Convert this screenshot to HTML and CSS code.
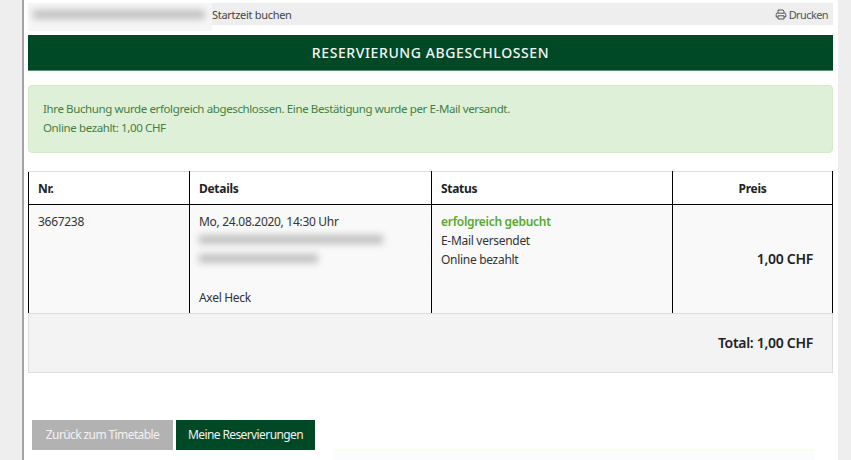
FILE: index.html
```html
<!DOCTYPE html>
<html lang="de">
<head>
<meta charset="utf-8">
<title>Reservierung abgeschlossen</title>
<link rel="stylesheet" href="styles.css">
</head>
<body>
<main class="page">
  <div class="topbar">
    <div class="crumb-mask"><span class="blur-bar"></span></div>
    <span class="crumb">Startzeit buchen</span>
    <a class="print">
      <svg class="print-icon" viewBox="0 0 12 11" aria-hidden="true"><path d="M3 4V1h5l1 1v2M3 8H1.2V5.2q0-1 1-1h7.6q1 0 1 1V8H9M3 6.8h6V10H3z" fill="none" stroke="currentColor" stroke-width="1"/></svg>
      Drucken
    </a>
  </div>
  <h1 class="banner">RESERVIERUNG ABGESCHLOSSEN</h1>
  <div class="alert">
    <p>Ihre Buchung wurde erfolgreich abgeschlossen. Eine Bestätigung wurde per E-Mail versandt.</p>
    <p>Online bezahlt: 1,00 CHF</p>
  </div>
  <table class="orders">
    <thead>
      <tr>
        <th class="c-nr">Nr.</th>
        <th class="c-details">Details</th>
        <th class="c-status">Status</th>
        <th class="c-price">Preis</th>
      </tr>
    </thead>
    <tbody>
      <tr>
        <td>3667238</td>
        <td>
          <div>Mo, 24.08.2020, 14:30 Uhr</div>
          <div class="line"><span class="blur-bar wide"></span></div>
          <div class="line"><span class="blur-bar narrow"></span></div>
          <div class="line"></div>
          <div>Axel Heck</div>
        </td>
        <td>
          <div class="ok">erfolgreich gebucht</div>
          <div>E-Mail versendet</div>
          <div>Online bezahlt</div>
        </td>
        <td class="amount">1,00 CHF</td>
      </tr>
    </tbody>
  </table>
  <div class="total">Total: 1,00 CHF</div>
  <div class="actions">
    <a class="btn btn-grey">Zurück zum Timetable</a>
    <a class="btn btn-green">Meine Reservierungen</a>
  </div>
  <div class="notice"></div>
</main>
</body>
</html>
```
FILE: styles.css
```css
* { box-sizing: border-box; }
html, body { height: 100%; }
body {
  margin: 0;
  overflow: hidden;
  background: #eeeeee;
  font-family: "Noto Sans", "Liberation Sans", sans-serif;
  font-size: 12px;
  letter-spacing: -0.3px;
  color: #333333;
}
.page {
  width: 816px;
  height: 460px;
  margin-left: 22px;
  padding: 3px 5px 0 4px;
  background: #ffffff;
  border-left: 2px solid #a3a3a3;
  overflow: hidden;
}
.topbar {
  display: flex;
  align-items: center;
  height: 22px;
  background: #eeeeee;
  font-size: 11px;
  letter-spacing: -0.3px;
}
.crumb-mask {
  flex: none;
  align-self: flex-start;
  display: flex;
  align-items: center;
  width: 184px;
  height: 28px;
  padding: 0 7px 6px 5px;
  background: #f6f6f6;
}
.blur-bar {
  display: block;
  height: 9px;
  background: #c0c0c0;
  filter: blur(3.5px);
}
.crumb-mask .blur-bar { width: 172px; }
.blur-bar.wide { width: 184px; }
.blur-bar.narrow { width: 119px; }
.crumb { color: #444444; }
.print {
  display: flex;
  align-items: center;
  gap: 2px;
  margin-left: auto;
  padding-right: 5px;
  color: #555555;
  letter-spacing: -0.6px;
}
.print-icon { width: 12px; height: 11px; }
.banner {
  margin: 10px 0 0;
  height: 36px;
  line-height: 36px;
  background: #004926;
  border-bottom: 1px solid #5d8f76;
  color: #f4f7f5;
  font-size: 14px;
  font-weight: 500;
  letter-spacing: 0.6px;
  text-align: center;
}
.alert {
  height: 68px;
  margin-top: 14px;
  padding: 13px 14px 0;
  background: #dff0d8;
  border: 1px solid #d6e9c6;
  border-radius: 4px;
  color: #437f44;
  font-size: 11.5px;
  letter-spacing: -0.38px;
  line-height: 19px;
}
.alert p { margin: 0; }
.orders {
  width: 805px;
  margin-top: 18px;
  border-collapse: collapse;
  table-layout: fixed;
}
.orders th, .orders td {
  padding: 0 9px;
  border-left: 1px solid #000000;
  border-right: 1px solid #000000;
  vertical-align: top;
  text-align: left;
}
.orders th {
  height: 33px;
  border-top: 1px solid #dddddd;
  border-bottom: 1px solid #000000;
  vertical-align: middle;
  color: #222222;
  font-weight: 700;
}
.orders td {
  height: 108px;
  padding-top: 7px;
  background: #f9f9f9;
  line-height: 19px;
}
.c-nr { width: 161px; }
.c-details { width: 242px; }
.c-status { width: 241px; }
.orders .c-price { text-align: center; }
.line { height: 19px; padding-top: 4px; }
.ok { color: #5aa832; font-weight: 600; }
.orders .amount {
  padding: 0 19px 0 0;
  vertical-align: middle;
  text-align: right;
  color: #222222;
  font-size: 14px;
  font-weight: 600;
}
.total {
  height: 60px;
  padding-right: 19px;
  background: #f3f3f3;
  border: 1px solid #dddddd;
  color: #222222;
  font-size: 14px;
  font-weight: 600;
  line-height: 57px;
  text-align: right;
}
.actions {
  display: flex;
  gap: 3px;
  margin: 47px 0 0 4px;
}
.btn {
  display: block;
  height: 30px;
  color: #f2f2f2;
  letter-spacing: -0.6px;
  line-height: 29px;
  text-align: center;
}
.btn-grey { width: 141px; background: #b2b2b2; }
.btn-green { width: 139px; background: #004926; }
.notice {
  width: 482px;
  height: 11px;
  margin: -1px 0 0 305px;
  background: #fbfcfc;
  border-top: 1px solid #fcfde6;
}
```
